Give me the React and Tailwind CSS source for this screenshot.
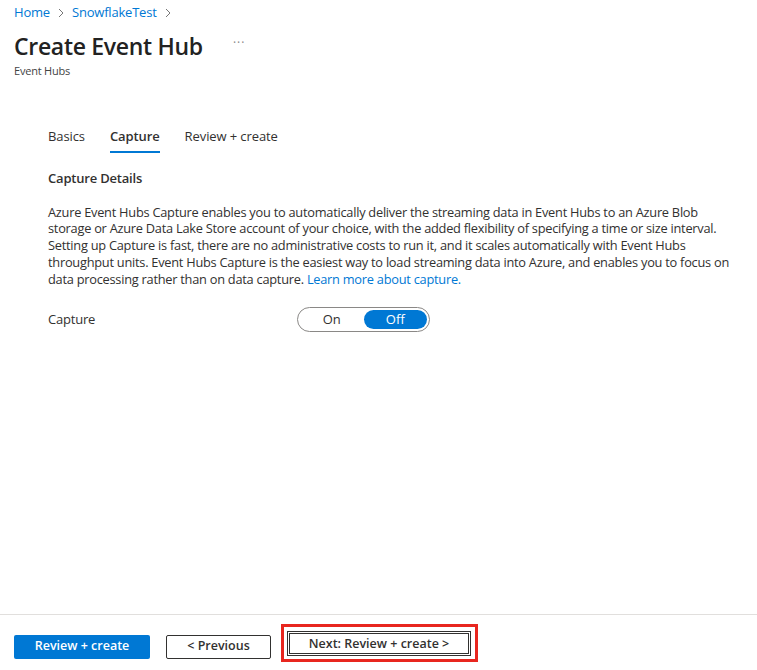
import { useState } from 'react';

const font = { fontFamily: '"Open Sans", "Noto Sans", sans-serif' };

function Chevron() {
  return (
    <svg width="8" height="10" viewBox="0 0 8 10" className="mx-[7px]">
      <path d="M2 1 L6 5 L2 9" fill="none" stroke="#777" strokeWidth="1" />
    </svg>
  );
}

export default function App() {
  const [capture, setCapture] = useState(false);

  return (
    <div className="w-[757px] h-[670px] bg-white flex flex-col text-[#323130]" style={font}>
      <div className="flex-1 px-[14px]">
        <div className="flex items-center pt-[4px] h-[22px] text-[13px] tracking-[-0.2px]">
          <span className="text-[#0078d4]">Home</span>
          <Chevron />
          <span className="text-[#0078d4]">SnowflakeTest</span>
          <Chevron />
        </div>
        <div className="flex items-center mt-[7px] h-[34px]">
          <h1 className="text-[23px] font-semibold tracking-[-0.3px] text-[#222]">Create Event Hub</h1>
          <span className="ml-[30px] text-[12px] text-[#888] tracking-[1px] -mt-[6px]">···</span>
        </div>
        <div className="text-[11px] text-[#444] tracking-[-0.2px]">Event Hubs</div>

        <div className="pl-[34px] mt-[47px]">
          <div className="flex gap-[25px] text-[13px] tracking-[-0.1px]">
            <button className="pb-[6px] text-[#323130]">Basics</button>
            <button className="pb-[5px] font-semibold border-b-2 border-[#0078d4]">Capture</button>
            <button className="pb-[6px] text-[#323130]">Review + create</button>
          </div>

          <h2 className="text-[13px] font-semibold mt-[16px] tracking-[-0.2px]">Capture Details</h2>

          <p className="mt-[15px] text-[12.8px] leading-[16.75px] tracking-[-0.25px] whitespace-nowrap">
            Azure Event Hubs Capture enables you to automatically deliver the streaming data in Event Hubs to an Azure Blob
            <br />
            storage or Azure Data Lake Store account of your choice, with the added flexibility of specifying a time or size interval.
            <br />
            Setting up Capture is fast, there are no administrative costs to run it, and it scales automatically with Event Hubs
            <br />
            throughput units. Event Hubs Capture is the easiest way to load streaming data into Azure, and enables you to focus on
            <br />
            data processing rather than on data capture. <span className="text-[#0078d4]">Learn more about capture.</span>
          </p>

          <div className="flex items-center mt-[20px]">
            <span className="w-[249px] text-[13px] tracking-[-0.2px]">Capture</span>
            <div className="flex w-[133px] h-[25px] border border-[#8a8886] rounded-full p-[2px] text-[13px]">
              <button
                onClick={() => setCapture(true)}
                className={`flex-1 rounded-full ${capture ? 'bg-[#0078d4] text-white' : 'text-[#323130]'}`}
              >
                On
              </button>
              <button
                onClick={() => setCapture(false)}
                className={`flex-1 rounded-full ${!capture ? 'bg-[#0078d4] text-white' : 'text-[#323130]'}`}
              >
                Off
              </button>
            </div>
          </div>
        </div>
      </div>

      <div className="border-t border-[#e1dfdd] h-[56px] flex items-center px-[14px] gap-[16px]">
        <button className="w-[136px] h-[24px] bg-[#0078d4] text-white text-[12.5px] font-semibold rounded-[2px] mt-[8px]">
          Review + create
        </button>
        <button className="w-[105px] h-[24px] border border-[#323130] text-[12.5px] font-semibold rounded-[2px] mt-[8px]">
          &lt; Previous
        </button>
        <div className="-ml-[6px] mt-[1px] border-[3px] border-[#e8261f] pl-[3px] pr-[4px] py-[3px]">
          <button className="w-[184px] h-[25px] border-[3px] border-double border-[#323130] text-[12.5px] font-semibold">
            Next: Review + create &gt;
          </button>
        </div>
      </div>
    </div>
  );
}
